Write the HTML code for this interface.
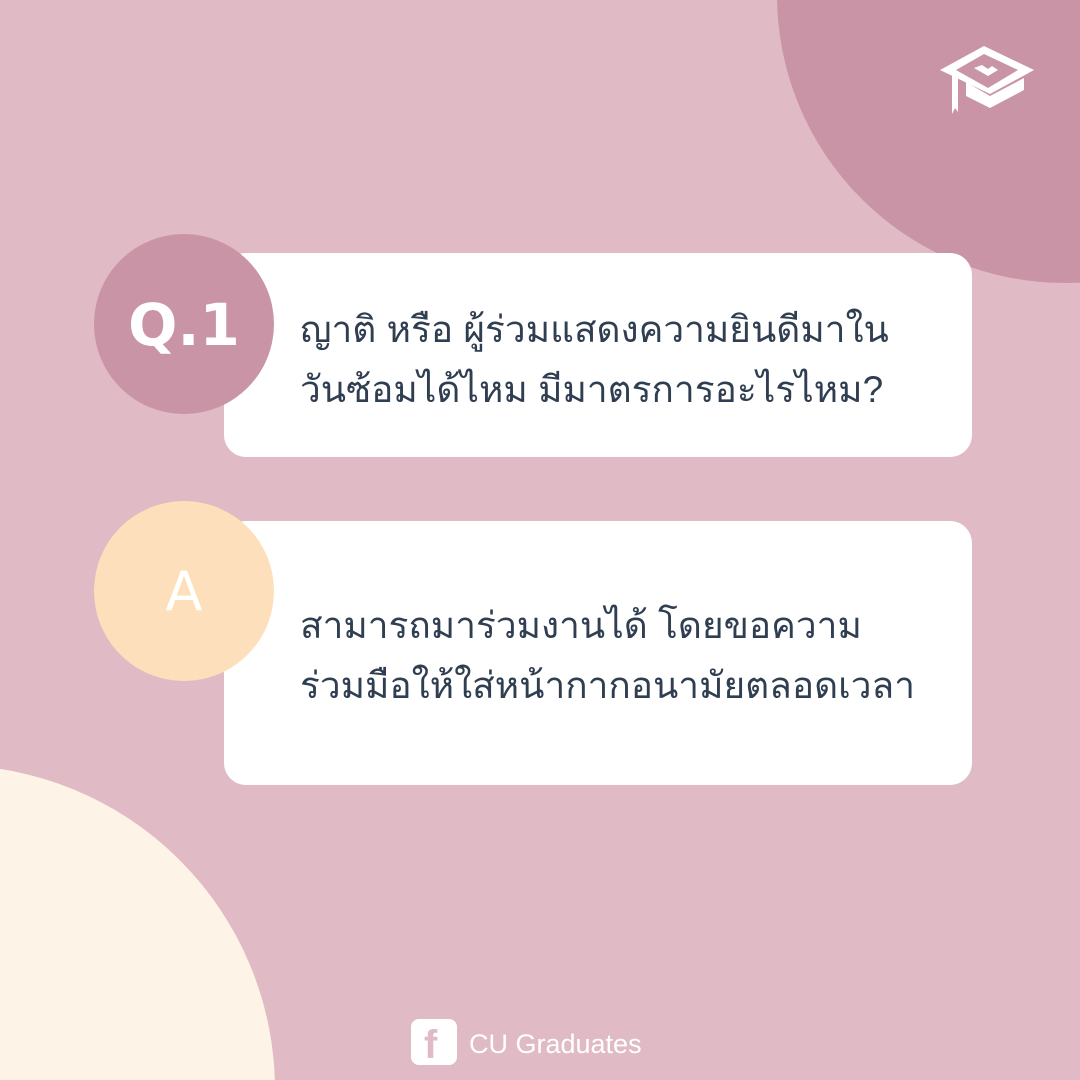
<!DOCTYPE html>
<html><head><meta charset="utf-8"><style>
html,body{margin:0;padding:0;width:1080px;height:1080px;overflow:hidden}
#w{width:1080px;height:1080px;overflow:hidden;background:#e0bac5;position:relative;font-family:"Liberation Sans","DejaVu Sans",sans-serif}
.c{position:absolute;border-radius:50%}
.card{position:absolute;left:224px;width:748px;background:#fff;border-radius:22px}
.t{position:absolute;left:300px;font-size:37px;color:#2f3e50;line-height:60px;white-space:nowrap}
.lbl{position:absolute;color:#fff;text-align:center;font-family:"DejaVu Sans","Liberation Sans",sans-serif}
</style></head><body><div id="w">
<svg style="position:absolute;left:0;top:0" width="1080" height="1080">
<circle cx="1065" cy="-5" r="288" fill="#c994a5"/>
<circle cx="-50" cy="1090" r="325" fill="#fdf3e6"/>
</svg>
<div class="card" style="top:253px;height:204px"></div>
<div class="card" style="top:521px;height:264px"></div>
<div class="c" style="left:94px;top:234px;width:180px;height:180px;background:#c994a5"></div>
<div class="c" style="left:94px;top:501px;width:180px;height:180px;background:#fedfbb"></div>
<div class="lbl" style="left:94px;top:290px;width:180px;font-size:58px;line-height:70px;font-weight:bold">Q.1</div>
<div class="lbl" style="left:94px;top:557px;width:180px;font-size:54px;line-height:70px">A</div>
<div class="t" style="top:300px">ญาติ หรือ ผู้ร่วมแสดงความยินดีมาใน</div>
<div class="t" style="top:360px">วันซ้อมได้ไหม มีมาตรการอะไรไหม?</div>
<div class="t" style="top:596px">สามารถมาร่วมงานได้ โดยขอความ</div>
<div class="t" style="top:656px">ร่วมมือให้ใส่หน้ากากอนามัยตลอดเวลา</div>
<svg style="position:absolute;left:938px;top:42px" width="98" height="74" viewBox="0 0 98 74" fill="#fff">
<path d="M2 28 L46 4 L96 28 L52 52 Z M18 28 L50 46 L80 28 L46 12 Z" fill-rule="evenodd"/>
<path d="M36 26 L50 34 L60 28 L54 24 L50 27 L44 23 Z"/>
<path d="M14 32 L20 35 L20 70 L17 66 L14 72 Z"/>
<path d="M28 40 L52 54 L86 36 L86 48 L52 66 L28 54 Z"/>
</svg>
<div style="position:absolute;left:411px;top:1019px;width:46px;height:46px;background:#fff;border-radius:8px"></div>
<div style="position:absolute;left:424px;top:1019px;width:30px;height:46px;color:#e0bac5;font-size:40px;font-weight:bold;line-height:52px;font-family:'Liberation Sans',sans-serif">f</div>
<div style="position:absolute;left:469px;top:1027px;color:#fff;font-size:27px;line-height:34px">CU Graduates</div>
</div></body></html>
